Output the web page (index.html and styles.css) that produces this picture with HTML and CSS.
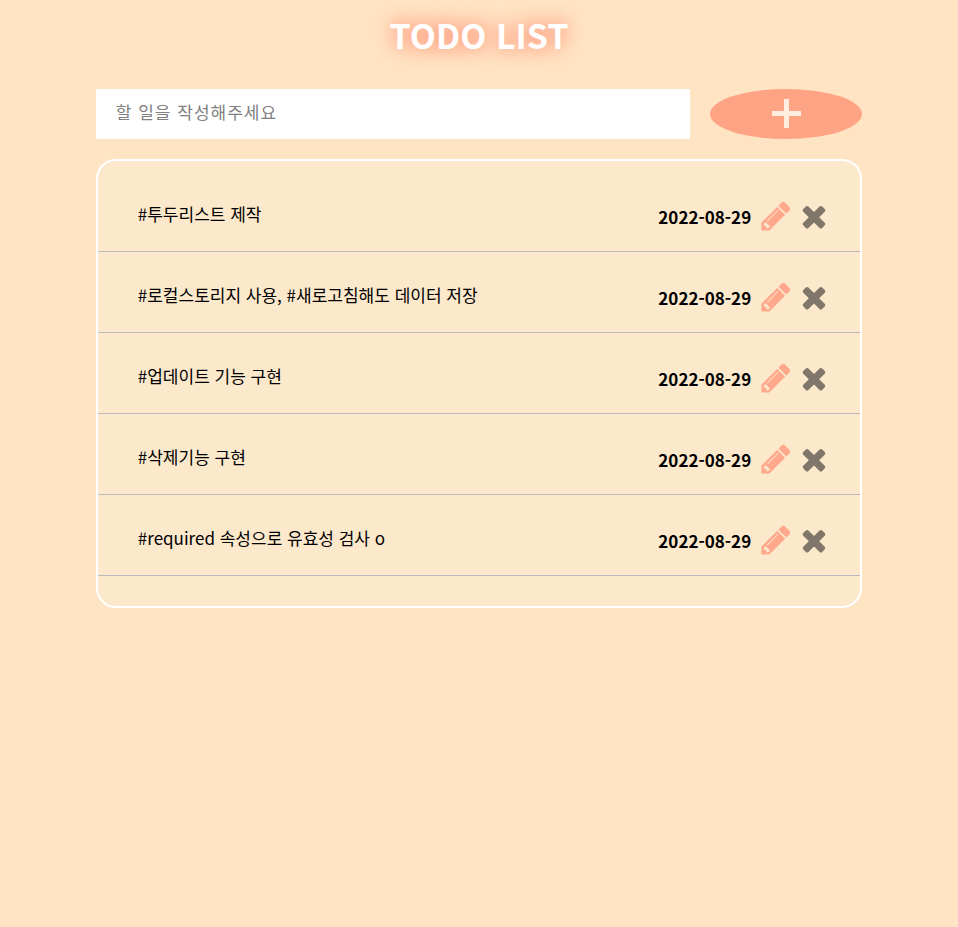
FILE: index.html
```html
<!DOCTYPE html>
<html lang="ko">
<head>
<meta charset="utf-8">
<meta name="viewport" content="width=device-width, initial-scale=1">
<title>TODO LIST</title>
<link rel="stylesheet" href="styles.css">
</head>
<body>
<svg class="sprite" aria-hidden="true">
<symbol id="pencil" viewBox="0 0 1792 1792"><path d="M491 1536l91-91-235-235-91 91v107h128v128h107zM1014 608q0-22-22-22-10 0-17 7l-542 542q-7 7-7 17 0 22 22 22 10 0 17-7l542-542q7-7 7-17zM960 416l416 416-832 832h-416v-416zM1643 512q0 53-37 90l-166 166-416-416 166-165q36-38 90-38 53 0 91 38l235 234q37 39 37 91z"/></symbol>
<symbol id="times" viewBox="0 0 1792 1792"><path d="M1490 1322q0 40-28 68l-136 136q-28 28-68 28t-68-28l-294-294-294 294q-28 28-68 28t-68-28l-136-136q-28-28-28-68t28-68l294-294-294-294q-28-28-28-68t28-68l136-136q28-28 68-28t68 28l294 294 294-294q28-28 68-28t68 28l136 136q28 28 28 68t-28 68l-294 294 294 294q28 28 28 68z"/></symbol>
</svg>
<main class="app">
<h1 class="title">TODO LIST</h1>
<form class="form">
<input class="field" type="text" placeholder="할 일을 작성해주세요" aria-label="할 일" required>
<button class="add" type="submit" aria-label="추가"><svg class="plus" viewBox="0 0 29 29"><path d="M12 0h5v12h12v5H17v12h-5V17H0v-5h12z"/></svg></button>
</form>
<ul class="list">
<li class="item"><span class="text">#투두리스트 제작</span><div class="meta"><time class="date">2022-08-29</time><button class="icon edit" aria-label="수정"><svg><use href="#pencil"/></svg></button><button class="icon remove" aria-label="삭제"><svg><use href="#times"/></svg></button></div></li>
<li class="item"><span class="text">#로컬스토리지 사용, #새로고침해도 데이터 저장</span><div class="meta"><time class="date">2022-08-29</time><button class="icon edit" aria-label="수정"><svg><use href="#pencil"/></svg></button><button class="icon remove" aria-label="삭제"><svg><use href="#times"/></svg></button></div></li>
<li class="item"><span class="text">#업데이트 기능 구현</span><div class="meta"><time class="date">2022-08-29</time><button class="icon edit" aria-label="수정"><svg><use href="#pencil"/></svg></button><button class="icon remove" aria-label="삭제"><svg><use href="#times"/></svg></button></div></li>
<li class="item"><span class="text">#삭제기능 구현</span><div class="meta"><time class="date">2022-08-29</time><button class="icon edit" aria-label="수정"><svg><use href="#pencil"/></svg></button><button class="icon remove" aria-label="삭제"><svg><use href="#times"/></svg></button></div></li>
<li class="item"><span class="text">#required 속성으로 유효성 검사 o</span><div class="meta"><time class="date">2022-08-29</time><button class="icon edit" aria-label="수정"><svg><use href="#pencil"/></svg></button><button class="icon remove" aria-label="삭제"><svg><use href="#times"/></svg></button></div></li>
</ul>
</main>
</body>
</html>
```
FILE: styles.css
```css
* { box-sizing: border-box; margin: 0; padding: 0; }
body {
  background: #ffe4c4;
  color: #000;
  font: 17px/24px "Noto Sans CJK KR", sans-serif;
}
.sprite { display: none; }
.app { width: 80%; margin: 0 auto; padding-top: 10px; }
.title {
  color: #fff;
  font-size: 34px;
  line-height: 50px;
  text-align: center;
  text-shadow: 0 0 20px #ff6347;
}
.form { display: flex; gap: 20px; margin: 29px 0 20px; }
.field {
  width: 78%;
  min-width: 0;
  height: 50px;
  padding: 0 20px 6px;
  border: 0;
  background: #fff;
  font: inherit;
  letter-spacing: 1px;
}
.field::placeholder { color: #808080; }
.add {
  display: flex;
  align-items: center;
  justify-content: center;
  width: 20%;
  height: 50px;
  padding-bottom: 2px;
  border: 0;
  border-radius: 50%;
  background: #ffa385;
}
.plus { width: 29px; height: 29px; fill: #ffeedd; }
.list {
  padding: 10px 0 30px;
  border: 2px solid #fff;
  border-radius: 20px;
  background: #fce8cb;
  list-style: none;
}
.item {
  display: flex;
  justify-content: space-between;
  padding: 28px 29px 18px 40px;
  border-bottom: 1px solid #bbb;
}
.text { padding-top: 3px; }
.meta { display: flex; align-items: center; gap: 4px; }
.date { margin-right: 4px; padding-top: 2px; font-weight: 700; }
.icon { border: 0; background: none; }
.icon svg { display: block; width: 34px; height: 34px; }
.edit { fill: #ffa88b; }
.remove { fill: #80766a; }
```
